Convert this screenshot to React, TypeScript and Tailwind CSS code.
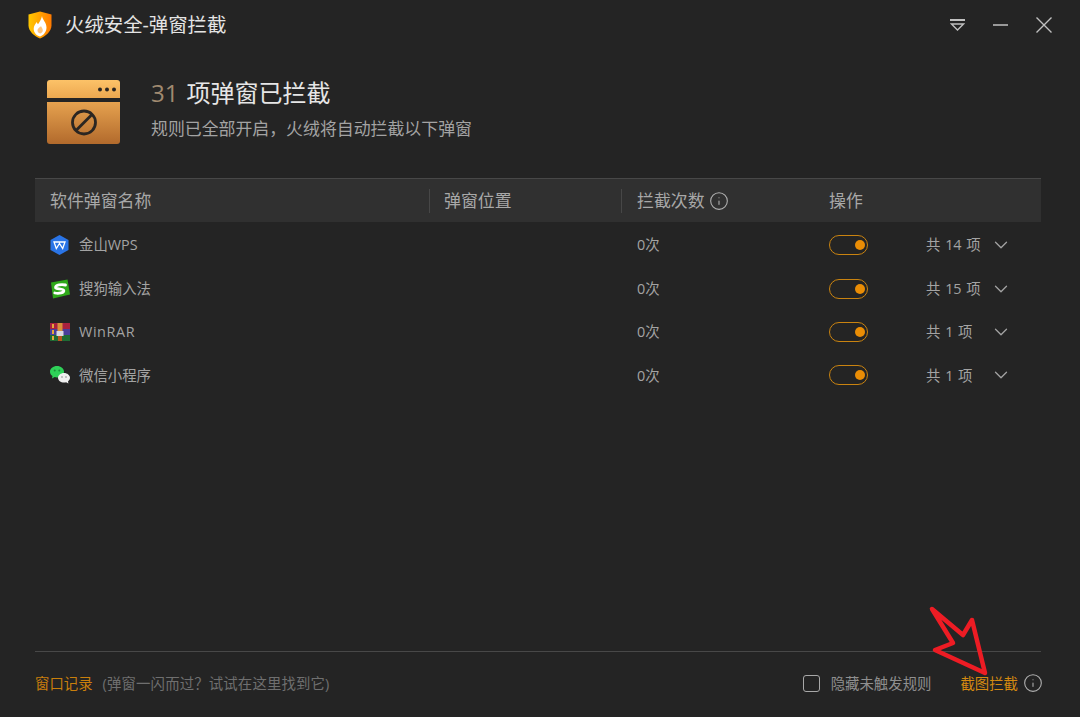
import { ChevronDown, Info } from "lucide-react";

const rows = [
  { name: "金山WPS", icon: <WpsIcon />, total: "共 14 项", nameClass: "" },
  { name: "搜狗输入法", icon: <SogouIcon />, total: "共 15 项", nameClass: "" },
  { name: "WinRAR", icon: <RarIcon />, total: "共 1 项", nameClass: "tracking-[0.6px]" },
  { name: "微信小程序", icon: <WechatIcon />, total: "共 1 项", nameClass: "" },
];

function ShieldLogo() {
  return (
    <svg width="24" height="28" viewBox="0 0 24 28">
      <defs>
        <linearGradient id="shield" x1="0" y1="0" x2="1" y2="0">
          <stop offset="0" stopColor="#ffc800" />
          <stop offset="1" stopColor="#ff7a00" />
        </linearGradient>
      </defs>
      <path d="M12 0.500 23.500 3.500V14.500c0 5.500-5.500 10.500-11.500 13C6 25 .5 20 .5 14.500V3.500Z" fill="url(#shield)" />
      <path d="M14 5c.2 3.500 4.500 6.500 4.500 11.500 0 4.500-3.200 8-6.500 9-3.600-1-6.300-4-6.300-7.800 0-3 1.800-4.700 3-6.700.3 1.100.7 1.800 1.300 2.300C11.500 11 13.400 8 14 5Z" fill="#fff" />
      <path d="M13 15c.4 1.500 1.800 2.500 1.800 4.300 0 1.600-1.100 2.900-2.600 3.200-1.600-.3-2.700-1.500-2.700-3 0-1.400 1-2 1.600-2.900.8-.3 1.500-.8 1.900-1.600Z" fill="#ffc680" />
    </svg>
  );
}

function WindowIcon() {
  return (
    <svg width="73" height="64" viewBox="0 0 73 64">
      <defs>
        <linearGradient id="winTop" x1="0" y1="0" x2="0" y2="1">
          <stop offset="0" stopColor="#fcc268" />
          <stop offset="1" stopColor="#eca850" />
        </linearGradient>
        <linearGradient id="winBody" x1="0" y1="0" x2="0" y2="1">
          <stop offset="0" stopColor="#e6a24f" />
          <stop offset="1" stopColor="#b26a2c" />
        </linearGradient>
      </defs>
      <path d="M3 0H70a3 3 0 0 1 3 3V18H0V3a3 3 0 0 1 3-3Z" fill="url(#winTop)" />
      <path d="M0 22H73V61a3 3 0 0 1-3 3H3a3 3 0 0 1-3-3Z" fill="url(#winBody)" />
      <circle cx="53" cy="9.500" r="2" fill="#2b2622" />
      <circle cx="60" cy="9.500" r="2" fill="#2b2622" />
      <circle cx="67" cy="9.500" r="2" fill="#2b2622" />
      <circle cx="37" cy="42.500" r="11.500" fill="none" stroke="#2b2622" strokeWidth="2.800" />
      <path d="M29 50.500 45 34.500" stroke="#2b2622" strokeWidth="2.800" />
    </svg>
  );
}

function WpsIcon() {
  return (
    <svg width="19" height="20" viewBox="0 0 19 20">
      <path d="M9.500 0 18.500 5V15L9.500 20 .5 15V5Z" fill="#2a74e6" />
      <path d="M4 7H15L12.700 13.500 9.500 8.500 6.300 13.500Z" fill="none" stroke="#fff" strokeWidth="1.300" />
    </svg>
  );
}

function SogouIcon() {
  return (
    <svg width="20" height="20" viewBox="0 0 20 20">
      <path d="M1 3.500 17.500 .5 20 15.500 3 19.500Z" fill="#2fa81a" />
      <path d="M15.500 6C11 5.200 6 6 5.500 8.300 5.100 10.500 13.300 9 13.800 11.500 14.200 13.700 9 15 4.800 14" fill="none" stroke="#fff" strokeWidth="2.800" strokeLinecap="round" />
    </svg>
  );
}

function RarIcon() {
  return (
    <svg width="20" height="18" viewBox="0 0 20 18">
      <rect x="0" y="0" width="20" height="6" fill="#a9213f" />
      <rect x="0" y="6" width="20" height="6" fill="#4a3f9a" />
      <rect x="0" y="12" width="20" height="6" fill="#1f6b34" />
      <rect x="2" y="1" width="2" height="4" fill="#e5a93a" />
      <rect x="2" y="7" width="2" height="4" fill="#e5a93a" />
      <rect x="2" y="13" width="2" height="4" fill="#e5a93a" />
      <rect x="7.500" y="0" width="5" height="8" fill="#d9903a" />
      <rect x="6.500" y="8" width="7" height="5" fill="#d8d8e0" />
      <rect x="8" y="13" width="4" height="5" fill="#b5561f" />
    </svg>
  );
}

function WechatIcon() {
  return (
    <svg width="20" height="18" viewBox="0 0 20 18">
      <path d="M7 0c3.900 0 7 2.500 7 5.700 0 3.200-3.100 5.800-7 5.800-.9 0-1.700-.1-2.400-.4L2 12.500l.5-2.400C1 9 0 7.500 0 5.700 0 2.500 3.100 0 7 0Z" fill="#2fd158" />
      <path d="M14 7c3.300 0 6 2.200 6 4.800 0 1.500-.8 2.700-2 3.600l.4 2.100-2.300-1.200c-.7.200-1.400.3-2.100.3-3.300 0-6-2.200-6-4.800C8 9.200 10.700 7 14 7Z" fill="#efefef" />
      <circle cx="4.700" cy="4.500" r="1" fill="#1c8f3a" />
      <circle cx="9.300" cy="4.500" r="1" fill="#1c8f3a" />
      <circle cx="12" cy="11" r=".8" fill="#8a8a8a" />
      <circle cx="16" cy="11" r=".8" fill="#8a8a8a" />
    </svg>
  );
}

function Toggle() {
  return (
    <div className="flex h-[20px] w-[39px] items-center justify-end rounded-full border-[1.5px] border-[#c98310] pr-[2px]">
      <div className="h-[10px] w-[10px] rounded-full bg-[#ea8d05]" />
    </div>
  );
}

function HeaderCell({ width, children, divider = true }: { width: string; children: React.ReactNode; divider?: boolean }) {
  return (
    <div className={`flex h-[24px] items-center ${width} ${divider ? "border-r border-[#474747]" : ""}`}>
      {children}
    </div>
  );
}

export default function App() {
  return (
    <div
      className="relative flex h-[717px] w-[1080px] flex-col overflow-hidden bg-[#242424] text-[#a3a3a3]"
      style={{ fontFamily: '"Open Sans", "Noto Sans CJK SC", sans-serif' }}
    >
      {/* title bar */}
      <div className="flex h-[50px] items-center pl-[28px] pr-[28px]">
        <ShieldLogo />
        <span className="ml-[13px] text-[19.4px] text-[#e4e4e4]">火绒安全-弹窗拦截</span>
        <div className="ml-auto flex items-center gap-[28px] text-[#c0c0c0]">
          <svg width="15" height="12" viewBox="0 0 15 12" fill="none" stroke="currentColor">
            <path d="M0 1H15" strokeWidth="2" />
            <path d="M1.500 5H13.500L7.500 11Z" strokeWidth="1.300" />
          </svg>
          <svg width="15" height="2" viewBox="0 0 15 2" stroke="currentColor" strokeWidth="1.500">
            <path d="M0 1H15" />
          </svg>
          <svg width="16" height="16" viewBox="0 0 16 16" stroke="currentColor" strokeWidth="1.400">
            <path d="M.5.5 15.500 15.500M15.500.5 .5 15.500" />
          </svg>
        </div>
      </div>

      {/* summary */}
      <div className="flex h-[128px] pl-[47px] pt-[30px]">
        <WindowIcon />
        <div className="ml-[31px] flex flex-col">
          <div className="-mt-[2px] flex h-[30px] items-center text-[24px] leading-none text-[#e6e6e6]">
            <span className="mr-[8px] text-[#a08a70]">31</span>
            项弹窗已拦截
          </div>
          <div className="mt-[9px] text-[16.900px] leading-[24px] text-[#a3a3a3]">规则已全部开启，火绒将自动拦截以下弹窗</div>
        </div>
      </div>

      {/* table */}
      <div className="ml-[35px] mr-[39px] flex h-[44px] items-center border-t border-[#484848] bg-[#303030] text-[16.900px] text-[#a8a8a8]">
        <HeaderCell width="w-[395px] pl-[15px]">软件弹窗名称</HeaderCell>
        <HeaderCell width="w-[192px] pl-[14px]">弹窗位置</HeaderCell>
        <HeaderCell width="w-[207px] pl-[15px] gap-[4px]" divider={false}>
          拦截次数
          <Info size={20} strokeWidth={1.300} className="text-[#b0b0b0]" />
        </HeaderCell>
        <span>操作</span>
      </div>
      <div className="ml-[35px] mr-[39px] flex flex-col pt-[1.5px]">
        {rows.map((row) => (
          <div key={row.name} className="flex h-[43.400px] items-center text-[14.400px] text-[#a3a3a3]">
            <div className="flex w-[602px] items-center">
              <div className="flex w-[44px] justify-center pl-[5px]">{row.icon}</div>
              <span className={row.nameClass}>{row.name}</span>
            </div>
            <span className="w-[192px]">0次</span>
            <Toggle />
            <span className="ml-[58px] w-[64px] whitespace-nowrap [word-spacing:1px]">{row.total}</span>
            <ChevronDown size={22} strokeWidth={1.400} />
          </div>
        ))}
      </div>

      {/* footer */}
      <div className="ml-[35px] mr-[39px] mt-auto flex h-[66px] items-center border-t border-[#484848] pb-[2px] text-[14.400px]">
        <span className="text-[#c97f0c]">窗口记录</span>
        <span className="ml-[10px] tracking-[0.15px] text-[#6f6f6f]">(弹窗一闪而过？试试在这里找到它)</span>
        <div className="ml-auto flex items-center">
          <div className="h-[17px] w-[17px] rounded-[3px] border border-[#a8a8a8]" />
          <span className="ml-[11px] text-[#8f8f8f]">隐藏未触发规则</span>
          <span className="ml-[29px] text-[#d58a10]">截图拦截</span>
          <Info size={20} strokeWidth={1.300} className="-mr-[2px] ml-[5px] text-[#b0b0b0]" />
        </div>
      </div>

      {/* red annotation arrow */}
      <svg className="absolute left-[925px] top-[602px]" width="70" height="80" viewBox="0 0 70 80" fill="none">
        <path d="M7 7 38 33 47 18 60 71 10 48 28 41Z" stroke="#ed1c24" strokeWidth="4.500" strokeLinejoin="round" />
      </svg>
    </div>
  );
}
